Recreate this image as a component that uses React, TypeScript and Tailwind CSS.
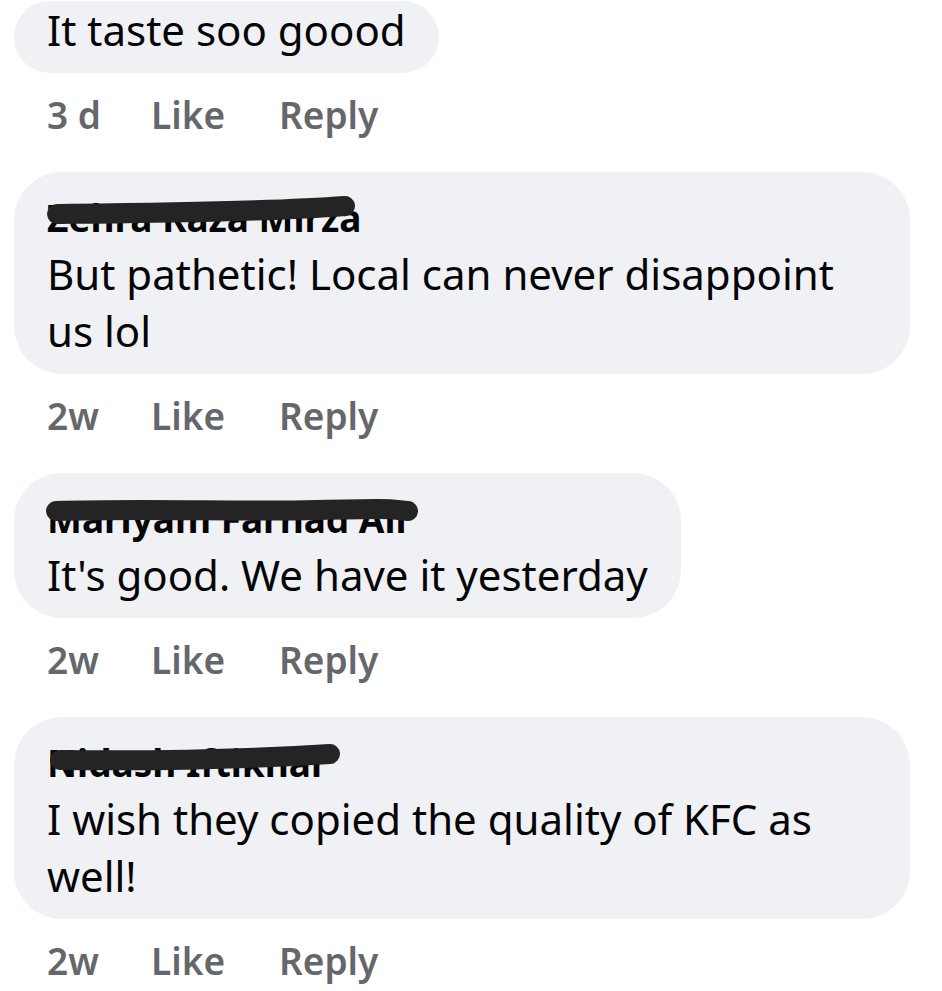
import React from 'react';

type Comment = {
  id: number;
  name?: string;
  text: string;
  time: string;
  scribble?: { w: number; d: string };
};

const comments: Comment[] = [
  { id: 1, text: 'It taste soo goood', time: '3 d' },
  {
    id: 2,
    name: 'Zehra Raza Mirza',
    text: 'But pathetic! Local can never disappoint us lol',
    time: '2w',
    scribble: { w: 330, d: 'M20 24 C 110 23, 230 22, 308 16' },
  },
  {
    id: 3,
    name: 'Mariyam Farhad Ali',
    text: "It's good. We have it yesterday",
    time: '2w',
    scribble: { w: 390, d: 'M19 20 C 110 17, 200 21, 280 19 S 350 18, 371 20' },
  },
  {
    id: 4,
    name: 'Nidash Iftikhar',
    text: 'I wish they copied the quality of KFC as well!',
    time: '2w',
    scribble: { w: 320, d: 'M23 25 C 110 26, 200 25, 293 19' },
  },
];

function Name({ name, scribble }: { name: string; scribble?: Comment['scribble'] }) {
  return (
    <div className="relative h-[55px] whitespace-nowrap leading-[55px] text-[37px] font-bold text-[#050505]">
      {name}
      {scribble && (
        <svg
          className="absolute left-[-10px] top-0"
          width={scribble.w}
          height={50}
          viewBox={`0 0 ${scribble.w} 50`}
          fill="none"
        >
          <path d={scribble.d} stroke="#242424" strokeWidth={20} strokeLinecap="round" />
        </svg>
      )}
    </div>
  );
}

function CommentItem({ c, first }: { c: Comment; first?: boolean }) {
  return (
    <div>
      <div
        className={`w-fit max-w-[896px] rounded-[48px] bg-[#f0f1f5] px-[33px] pb-[15px] ${first ? 'pt-0' : 'pt-[18px]'}`}
      >
        {c.name && <Name name={c.name} scribble={c.scribble} />}
        <p className="text-[42px] leading-[57px] text-[#050505]">{c.text}</p>
      </div>
      <div className="flex h-[99px] pl-[33px] pt-[14px] text-[37px] font-semibold leading-[56px] text-[#65676b]">
        <span className="w-[104px]">{c.time}</span>
        <span className="w-[128px]">Like</span>
        <span>Reply</span>
      </div>
    </div>
  );
}

export default function App() {
  return (
    <div className="h-[991px] w-[942px] overflow-hidden bg-white font-['Noto_Sans',sans-serif]">
      <div className="mt-[1px] pl-[14px]">
        {comments.map((c, i) => (
          <CommentItem key={c.id} c={c} first={i === 0} />
        ))}
      </div>
    </div>
  );
}
